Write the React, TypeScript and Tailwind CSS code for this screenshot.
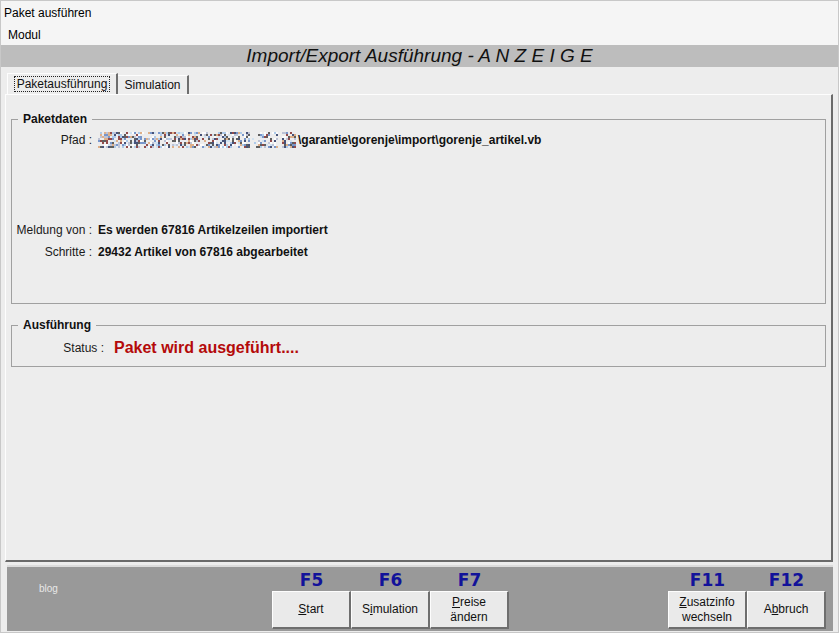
import React from "react";

const FONT = { fontFamily: '"Liberation Sans", Arial, sans-serif' };

// pixel noise standing in for the redacted part of the path
function Redacted() {
  const cells: { x: number; y: number; c: string }[] = [];
  let seed = 7;
  const rnd = () => {
    seed = (seed * 16807) % 2147483647;
    return seed / 2147483647;
  };
  const palette = ["#1b2a5a", "#5a7fc0", "#9cc0e8", "#c8ddf0", "#3a3a3a", "#d9a070", "#7a2020", "#b0b8d0", "#ffffff", "#e8e8f0"];
  for (let y = 0; y < 16; y += 2) {
    for (let x = 0; x < 200; x += 2) {
      const gap = (x > 150 && x < 160) || (x > 178 && x < 184) || x > 196;
      if (gap && rnd() > 0.15) continue;
      if (rnd() < 0.3) continue;
      cells.push({ x, y, c: palette[Math.floor(rnd() * palette.length)] });
    }
  }
  return (
    <svg width="200" height="16" className="shrink-0">
      {cells.map((p, i) => (
        <rect key={i} x={p.x} y={p.y} width="2" height="2" fill={p.c} opacity={0.8} />
      ))}
    </svg>
  );
}

function Row({ label, children }: { label: string; children: React.ReactNode }) {
  return (
    <div className="flex items-center h-[16px]">
      <div className="w-[86px] text-right text-[12px] text-[#1a1a1a] pr-[6px] shrink-0">{label}</div>
      {children}
    </div>
  );
}

function FButton({ fkey, children }: { fkey: string; children: React.ReactNode }) {
  return (
    <div className="flex flex-col items-stretch w-[79px]">
      <div
        className="h-[24px] pt-[3px] flex items-center justify-center text-[17px] font-bold text-[#12129a]"
        style={{ fontFamily: '"DejaVu Sans", Verdana, sans-serif' }}
      >
        {fkey}
      </div>
      <div className="h-[38px] bg-[#eaeaea] border-t border-l border-t-[#fdfdfd] border-l-[#fdfdfd] border-r-2 border-b-2 border-r-[#6e6e6e] border-b-[#6e6e6e] flex flex-col items-center justify-center text-[12px] leading-[15px] text-[#111]">
        {children}
      </div>
    </div>
  );
}

export default function App() {
  return (
    <div className="w-[839px] h-[633px] bg-[#ededed] border border-[#c8c8c8] flex flex-col overflow-hidden" style={FONT}>
      {/* title + menu */}
      <div className="bg-[#f5f5f5] h-[44px] flex flex-col shrink-0">
        <div className="h-[24px] flex items-center pl-[3px] text-[12px] text-black">Paket ausführen</div>
        <div className="h-[20px] flex items-center pl-[7px] text-[12px] text-black">Modul</div>
      </div>

      {/* header band */}
      <div className="h-[22px] bg-[#bdbdbd] flex items-center justify-center text-[19px] italic text-[#111] shrink-0">
        Import/Export Ausführung - A N Z E I G E
      </div>

      {/* tabs */}
      <div className="flex items-end h-[27px] pl-[6px] pt-[6px] shrink-0">
        <div className="h-[21px] w-[111px] px-[2px] bg-[#ededed] border-t border-l border-[#fdfdfd] border-r-2 border-r-[#6e6e6e] flex items-center justify-center">
          <span className="border border-dotted border-[#222] px-[2px] text-[12px] leading-[14px] text-[#111]">Paketausführung</span>
        </div>
        <div className="h-[19px] w-[71px] bg-[#ededed] border-t border-[#fdfdfd] border-r-2 border-r-[#6e6e6e] flex items-center justify-center text-[12px] text-[#111]">
          Simulation
        </div>
      </div>

      {/* tab panel */}
      <div className="mx-[4px] mr-[5px] h-[468px] shrink-0 border-t border-l border-[#fdfdfd] border-r-2 border-b-2 border-r-[#6a6a6a] border-b-[#6a6a6a] flex flex-col px-[5px] pt-[15px]">
        <fieldset className="border border-[#a0a0a0] h-[194px] px-0 pt-[4px] flex flex-col">
          <legend className="ml-[6px] px-[5px] text-[12px] font-bold text-[#111]">Paketdaten</legend>
          <Row label="Pfad :">
            <div className="flex items-center">
              <Redacted />
              <span className="text-[12px] font-bold text-[#111]">\garantie\gorenje\import\gorenje_artikel.vb</span>
            </div>
          </Row>
          <div className="h-[74px]" />
          <Row label="Meldung von :">
            <span className="text-[12px] font-bold text-[#111]">Es werden 67816 Artikelzeilen importiert</span>
          </Row>
          <div className="h-[6px]" />
          <Row label="Schritte :">
            <span className="text-[12px] font-bold text-[#111]">29432 Artikel von 67816 abgearbeitet</span>
          </Row>
        </fieldset>

        <fieldset className="border border-[#a0a0a0] h-[51px] mt-[12px] px-0 pt-0 flex flex-col">
          <legend className="ml-[6px] px-[5px] text-[12px] font-bold text-[#111]">Ausführung</legend>
          <div className="flex items-center h-[22px] mt-[3px]">
            <div className="w-[102px] text-right text-[12px] text-[#1a1a1a] pr-[10px] shrink-0">Status :</div>
            <span className="text-[16px] font-bold text-[#b40a0a]">Paket wird ausgeführt....</span>
          </div>
        </fieldset>
      </div>

      {/* footer */}
      <div className="mt-[3px] mx-[6px] mr-[5px] border-t-2 border-t-[#dcdcdc] h-[66px] bg-[#999999] flex shrink-0">
        <div className="w-[265px] pl-[32px] pt-[14px] text-[10px] text-[#e8e8e8]">blog</div>
        <div className="flex self-start">
          <FButton fkey="F5">
            <span><span className="underline">S</span>tart</span>
          </FButton>
          <FButton fkey="F6">
            <span>S<span className="underline">i</span>mulation</span>
          </FButton>
          <FButton fkey="F7">
            <span><span className="underline">P</span>reise</span>
            <span>ändern</span>
          </FButton>
        </div>
        <div className="flex-1" />
        <div className="flex self-start pr-[7px]">
          <FButton fkey="F11">
            <span><span className="underline">Z</span>usatzinfo</span>
            <span>wechseln</span>
          </FButton>
          <FButton fkey="F12">
            <span>A<span className="underline">b</span>bruch</span>
          </FButton>
        </div>
      </div>
    </div>
  );
}
